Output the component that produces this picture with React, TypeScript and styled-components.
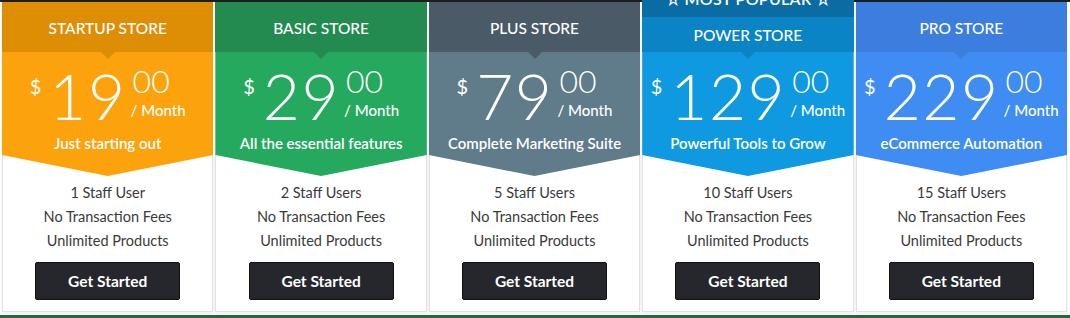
import styled, { createGlobalStyle } from 'styled-components';

type Plan = {
  name: string;
  price: string;
  tagline: string;
  users: string;
  head: string;
  body: string;
  popular?: boolean;
  banner?: string;
};

const plans: Plan[] = [
  { name: 'Startup Store', price: '19', tagline: 'Just starting out', users: '1 Staff User', head: '#dd8e05', body: '#fca20c' },
  { name: 'Basic Store', price: '29', tagline: 'All the essential features', users: '2 Staff Users', head: '#238a50', body: '#25a95e' },
  { name: 'Plus Store', price: '79', tagline: 'Complete Marketing Suite', users: '5 Staff Users', head: '#4a5a66', body: '#607b89' },
  { name: 'Power Store', price: '129', tagline: 'Powerful Tools to Grow', users: '10 Staff Users', head: '#0a84c5', body: '#0e99e1', popular: true, banner: '#0a6ca3' },
  { name: 'Pro Store', price: '229', tagline: 'eCommerce Automation', users: '15 Staff Users', head: '#3b7ede', body: '#3f8cf2' },
];

const App = () => {
  return (
    <>
      <GlobalStyle />
      <Page>
        {plans.map((p) => (
          <Card key={p.name} $popular={p.popular}>
            {p.popular && <Banner $bg={p.banner!}>☆ Most Popular ☆</Banner>}
            <Header $bg={p.head} $short={p.popular}>{p.name}</Header>
            <Body $bg={p.body}>
              <Price>
                <Dollar>$</Dollar>
                <Amount>{p.price}</Amount>
                <Cents>
                  <span>00</span>
                  <Period>/ Month</Period>
                </Cents>
              </Price>
              <Tagline>{p.tagline}</Tagline>
            </Body>
            <Features>
              <li>{p.users}</li>
              <li>No Transaction Fees</li>
              <li>Unlimited Products</li>
            </Features>
            <Button>Get Started</Button>
          </Card>
        ))}
      </Page>
    </>
  );
};

export default App;

const GlobalStyle = createGlobalStyle`
  html, body {
    margin: 0;
    padding: 0;
    background: #fff;
    font-family: Lato, "Noto Sans", sans-serif;
    overflow: hidden;
  }
`;

const Page = styled.div`
  display: flex;
  align-items: flex-start;
  gap: 2px;
  height: 318px;
  padding: 0 3px 0 2px;
  border-top: 2px solid #1e1e1e;
  border-bottom: 3px solid #1f6b3c;
  box-sizing: border-box;
  background: #fff;
`;

const Card = styled.div<{ $popular?: boolean }>`
  flex: 1;
  position: relative;
  z-index: ${(p) => (p.$popular ? 2 : 1)};
  margin-top: ${(p) => (p.$popular ? '-21px' : '0')};
  height: ${(p) => (p.$popular ? '331px' : '310px')};
  display: flex;
  flex-direction: column;
  align-items: center;
  background: #fff;
  border: 1px solid #e2e2e2;
  border-top: none;
  box-shadow: 0 1px 3px rgba(0, 0, 0, 0.08);
  box-sizing: border-box;
`;

const Banner = styled.div<{ $bg: string }>`
  align-self: stretch;
  height: 36px;
  margin: 0 -1px;
  background: ${(p) => p.$bg};
  color: #fff;
  font-size: 16px;
  font-weight: 600;
  text-transform: uppercase;
  letter-spacing: 0.3px;
  display: flex;
  align-items: center;
  justify-content: center;
`;

const Header = styled.div<{ $bg: string; $short?: boolean }>`
  position: relative;
  align-self: stretch;
  margin: 0 -1px;
  height: ${(p) => (p.$short ? '35px' : '50px')};
  padding-top: ${(p) => (p.$short ? '0' : '1px')};
  background: ${(p) => p.$bg};
  color: #fff;
  font-size: 15.5px;
  font-weight: 500;
  text-transform: uppercase;
  display: flex;
  align-items: center;
  justify-content: center;
  box-sizing: border-box;
  z-index: 1;

  &::after {
    content: '';
    position: absolute;
    left: 50%;
    bottom: -7px;
    margin-left: -7px;
    border-left: 7px solid transparent;
    border-right: 7px solid transparent;
    border-top: 7px solid ${(p) => p.$bg};
  }
`;

const Body = styled.div<{ $bg: string }>`
  align-self: stretch;
  margin: 0 -1px;
  height: 124px;
  background: ${(p) => p.$bg};
  color: #fff;
  display: flex;
  flex-direction: column;
  align-items: center;
  padding-top: 14px;
  box-sizing: border-box;
  clip-path: polygon(0 0, 100% 0, 100% calc(100% - 21px), 50% 100%, 0 calc(100% - 21px));
`;

const Price = styled.div`
  display: flex;
  align-items: flex-start;
`;

const Dollar = styled.span`
  font-size: 20px;
  font-weight: 400;
  margin-top: 8px;
  margin-right: 8px;
`;

const Amount = styled.span`
  font-size: 64px;
  font-weight: 300;
  line-height: 60px;
  letter-spacing: 1.5px;
`;

const Cents = styled.div`
  display: flex;
  flex-direction: column;
  align-items: flex-start;
  margin-left: 6px;
  font-size: 32px;
  font-weight: 300;
  line-height: 32px;
  margin-top: -1px;
`;

const Period = styled.span`
  font-size: 15px;
  font-weight: 500;
  line-height: 18px;
  margin-top: 4px;
  margin-left: -2px;
`;

const Tagline = styled.div`
  margin-top: 8px;
  font-size: 15px;
  font-weight: 600;
`;

const Features = styled.ul`
  list-style: none;
  margin: 5px 0 0;
  padding: 0;
  text-align: center;
  color: #3a3a3a;
  font-size: 14.5px;
  line-height: 24px;
`;

const Button = styled.button`
  margin-top: 9px;
  width: 145px;
  height: 38px;
  border: 1px solid #111;
  border-radius: 2px;
  background: #26272c;
  color: #fff;
  font-family: inherit;
  font-size: 15.5px;
  font-weight: 700;
  cursor: pointer;
`;
